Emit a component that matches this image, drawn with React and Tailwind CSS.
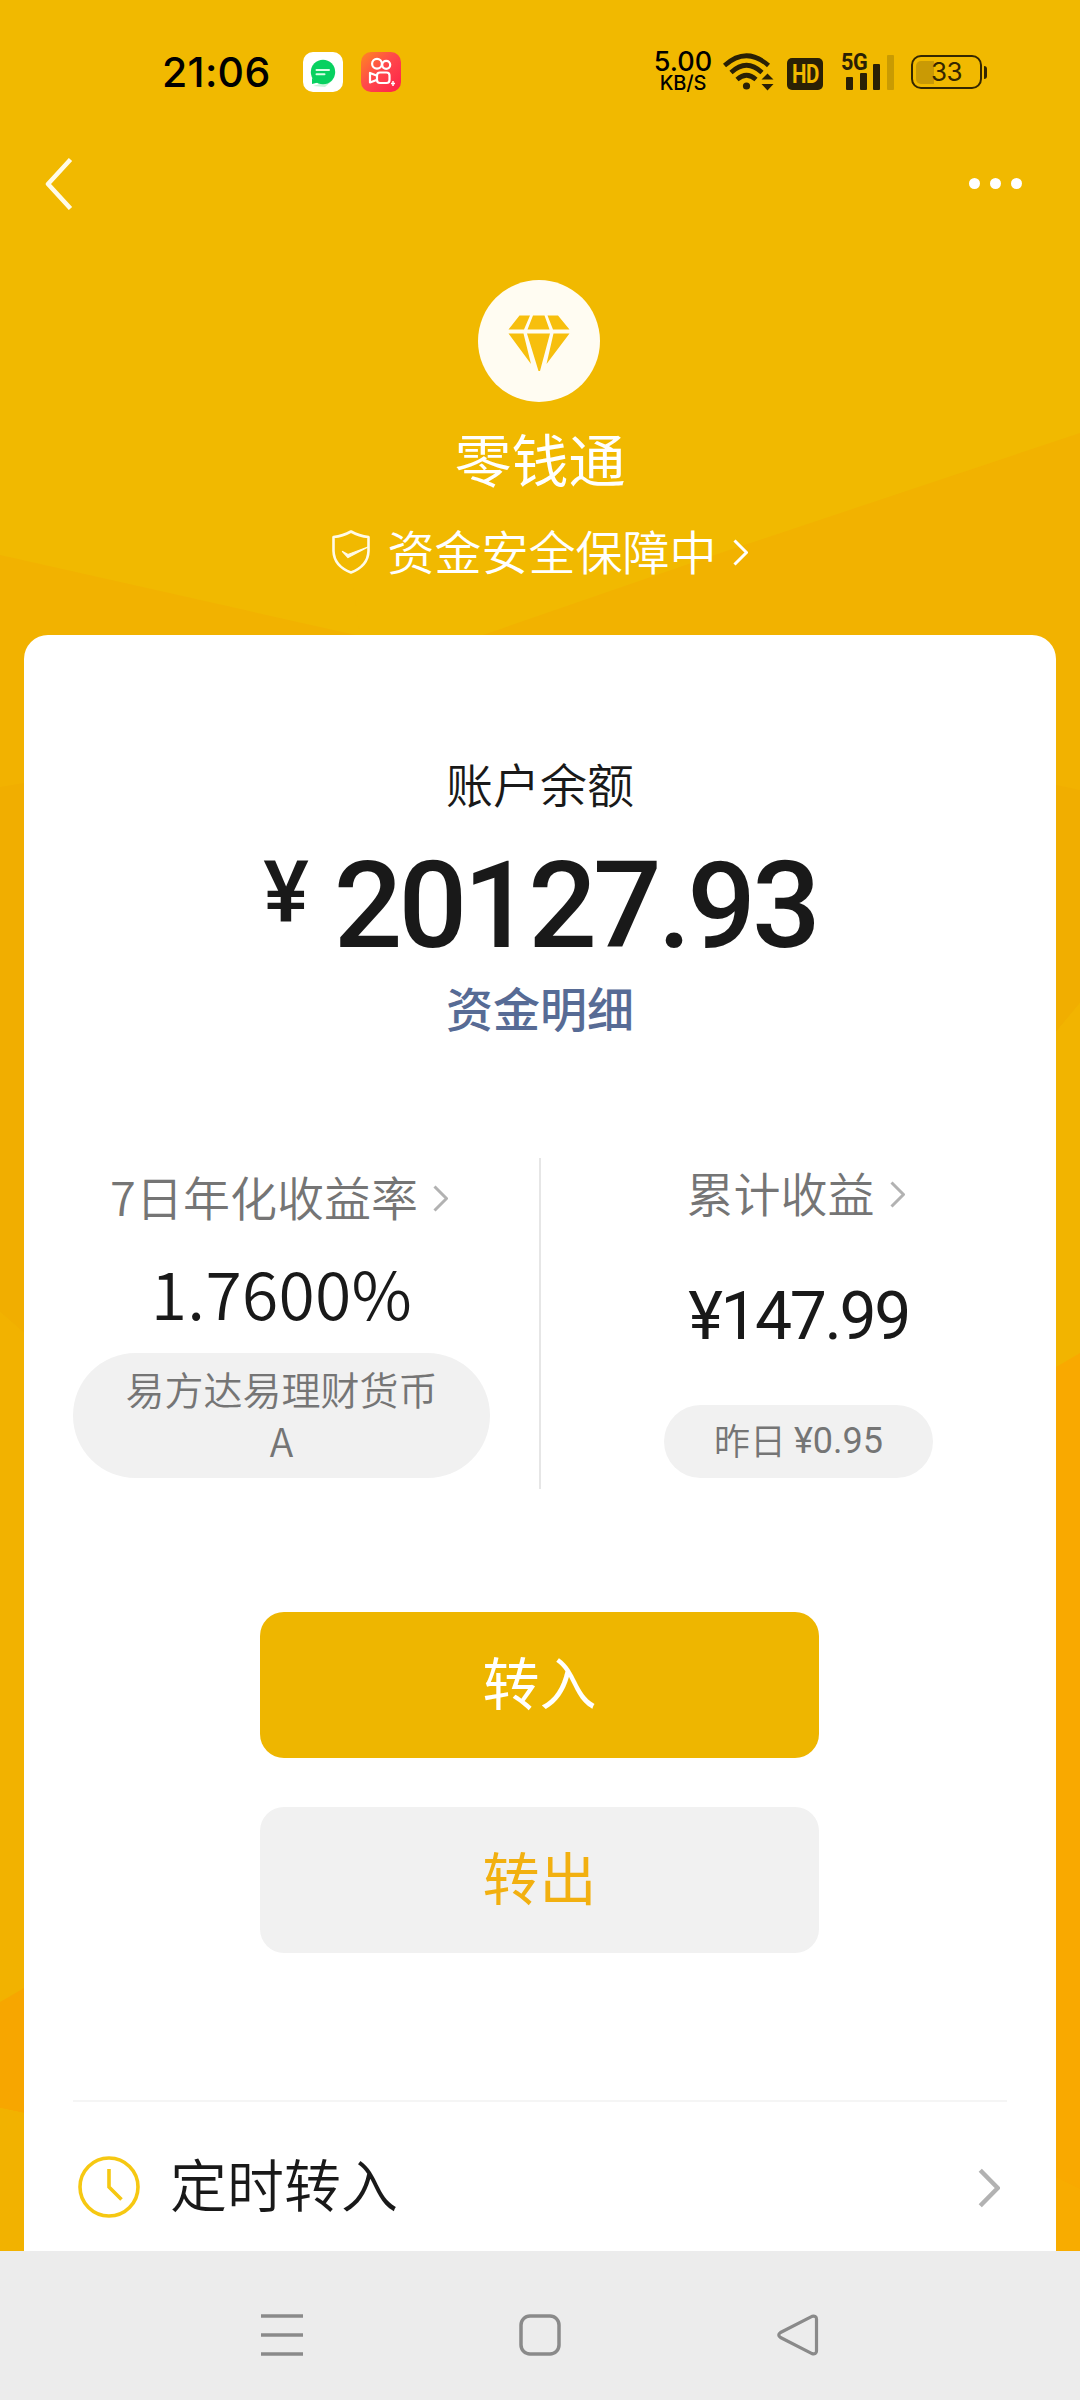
const cjk = 'font-["Noto_Sans_CJK_SC",sans-serif]'
const num = 'font-["Roboto","Noto_Sans_CJK_SC",sans-serif]'

function Backdrop() {
  return (
    <svg className="col-start-1 row-start-1 block" width="1080" height="2251" viewBox="0 0 1080 2251">
      <rect width="1080" height="2251" fill="#f1b900" />
      <path d="M0 555 360 636 490 630 1080 433V790H0Z" fill="#f2b200" />
      <path d="M350 560H700L480 636H360Z" fill="#f1b900" />
      <path d="M0 787 24 783 1056 785 1080 790V1003L1056 1032 24 1333 0 1312Z" fill="#f1ae00" />
      <path d="M0 1312 24 1333V1988L0 2002Z" fill="#f2b200" />
      <path d="M1056 1032 1080 1003V1353L1056 1367Z" fill="#f2b400" />
      <path d="M0 2002 24 1988V2113L0 2108Z" fill="#f7a600" />
      <path d="M0 2108 24 2113V2251H0Z" fill="#f2b200" />
      <path d="M1056 1367 1080 1353V2251H1056Z" fill="#f9a900" />
      <path d="M1056 2177 1080 2189V2251H1056Z" fill="#f8ac00" />
    </svg>
  )
}

function Chevron({ className, width = 15, height = 27, stroke = 3 }) {
  return (
    <svg className={className} width={width} height={height} fill="none" stroke="currentColor" strokeWidth={stroke} strokeLinejoin="round">
      <path d={`M${stroke / 2} ${stroke / 2} L${width - stroke / 2} ${height / 2} L${stroke / 2} ${height - stroke / 2}`} />
    </svg>
  )
}

function StatusBar() {
  return (
    <div className='flex h-36 items-center pl-[162px] pr-[93px] font-["Inter",sans-serif]'>
      <span className="w-[141px] text-[41px] font-medium leading-none tracking-[0.3px] text-black">21:06</span>
      <svg className="mr-[18px]" width="40" height="40" viewBox="0 0 40 40">
        <rect width="40" height="40" rx="10" fill="#fff" />
        <path d="M10 34 22 35 30 28Z" fill="#c9f5d9" />
        <path d="M9 26v6l6-1.500Z" fill="#07d160" />
        <circle cx="20" cy="20" r="12.200" fill="#07d160" />
        <path d="M13.500 18h12.500M13.500 22.200h8" stroke="#d9ffe6" strokeWidth="2" strokeLinecap="round" />
      </svg>
      <svg width="40" height="40" viewBox="0 0 40 40">
        <defs>
          <linearGradient id="ks" x1="0" y1="0" x2="1" y2="1">
            <stop offset="0" stopColor="#ff8a1f" />
            <stop offset=".45" stopColor="#ff4a4a" />
            <stop offset="1" stopColor="#ff1f4b" />
          </linearGradient>
        </defs>
        <rect width="40" height="40" rx="10" fill="url(#ks)" />
        <g fill="none" stroke="#fff" strokeWidth="2.200" strokeLinejoin="round">
          <circle cx="16" cy="11.800" r="4.900" />
          <circle cx="25.200" cy="12.800" r="4" />
          <rect x="16" y="20.500" width="12.500" height="10.500" rx="3" />
          <path d="M15.500 23.500 9 21v9.500l6.500-2.500" />
        </g>
        <path d="M32 29v5M30 31.500h4" stroke="#fff" strokeWidth="1.500" />
      </svg>
      <div className="ml-auto flex w-[62px] flex-col items-center font-medium text-black">
        <span className="text-[27px] leading-[21px]">5.00</span>
        <span className="mt-[1px] text-[20px] leading-[20px] tracking-[-0.2px]">KB/S</span>
      </div>
      <svg className="ml-[9px]" width="52" height="40" viewBox="0 0 52 40" fill="none" stroke="#2a2005" strokeWidth="4.600">
        <path d="M1.500 13.500Q23.500-6 45.500 13.500" />
        <path d="M8 20.500Q23.500 6 39 20.500" />
        <path d="M14 27.500Q23.500 19 33 27.500" />
        <circle cx="23.500" cy="34" r="3.600" fill="#2a2005" stroke="none" />
        <path d="M38.500 27.500 44.500 21.500 50.500 27.500ZM38.500 32 44.500 38.500 50.500 32Z" fill="#2a2005" stroke="none" />
      </svg>
      <div className='ml-[12px] mt-1 flex h-8 w-9 items-center justify-center rounded-[5px] bg-[#2a2005] font-["Roboto",sans-serif] text-[25px] font-bold leading-none tracking-[-0.5px] text-[#f2b900]'>
        <span className="scale-x-[0.82]">HD</span>
      </div>
      <div className="relative ml-[18px] h-9">
        <svg width="53" height="36" viewBox="0 0 53 36" fill="#2a2005">
          <rect x="5" y="23" width="7" height="13" rx="1" />
          <rect x="19" y="19" width="7" height="17" rx="1" />
          <rect x="32" y="10" width="7" height="26" rx="1" />
          <rect x="46" y="1" width="7" height="35" rx="1" fill="#c99b02" />
        </svg>
        <span className='absolute -top-[4px] left-0 origin-left scale-x-90 font-["Roboto",sans-serif] text-[24px] font-bold leading-[24px] tracking-[-0.5px] text-[#2a2005]'>5G</span>
      </div>
      <div className="ml-[17px] flex items-center">
        <div className="relative flex h-[34px] w-[71px] items-center justify-center rounded-[10px] border-[2.5px] border-[#352700]">
          <div className="absolute left-[3px] h-[23px] w-[18px] rounded-l-[5px] bg-[#c99a05]" />
          <span className='relative font-["Inter",sans-serif] text-[26px] leading-none tracking-[-0.5px] text-[#352700]'>33</span>
        </div>
        <div className="ml-[2px] h-[13px] w-[3px] rounded-r bg-[#352700]" />
      </div>
    </div>
  )
}

function Header() {
  return (
    <header className="flex flex-col items-center text-white">
      <div className="flex h-[79px] w-full items-center justify-between pl-[45px] pr-[58px]">
        <svg width="28" height="52" fill="none" stroke="#fffbe8" strokeWidth="4.500" strokeLinejoin="round">
          <path d="M25.500 1.500 3 26 25.500 50.500" />
        </svg>
        <div className="flex gap-[10px]">
          <i className="size-[11px] rounded-full bg-white" />
          <i className="size-[11px] rounded-full bg-white" />
          <i className="size-[11px] rounded-full bg-white" />
        </div>
      </div>
      <div className="mt-[57px] mr-[2px] flex size-[122px] items-center justify-center rounded-full bg-[#fffcf2] pt-[5px]">
        <svg width="62" height="57" viewBox="0 0 62 57" fill="#f7bf0d">
          <path d="M11.500.500H22L16 14.500H.500ZM25 .500H36.500L41.500 14.500H19.500ZM39.500.500H50L61.500 14.500H45ZM.500 18.500H15.500L23 49ZM19 18.500H42L32 56H30.500ZM45.500 18.500H61.500L38.500 49Z" />
        </svg>
      </div>
      <h1 className="mt-[17px] h-[76px] text-[57px] leading-[76px]">零钱通</h1>
      <div className="mt-[25px] mr-[1px] flex h-[60px] items-center">
        <svg className="mt-[3px]" width="38" height="44" viewBox="0 0 38 44" fill="none" stroke="#fffbe8" strokeWidth="2.600" strokeLinejoin="round">
          <path d="M19 1.500Q27 6 36.500 7V21Q36 36 19 42.500 2 36 1.500 21V7Q11 6 19 1.500Z" />
          <path d="M10.500 21.500 16 27.500 36 17 16 24.500Z" fill="#fffbe8" strokeWidth="1.300" />
        </svg>
        <span className="ml-[18px] text-[47px] font-[350] leading-[60px]">资金安全保障中</span>
        <Chevron className="ml-[16px] mt-[4px]" />
      </div>
    </header>
  )
}

function Stats() {
  return (
    <div className="mt-[122px] flex h-[331px] justify-between text-[#757575]">
      <div className="flex w-[417px] flex-col items-center pt-2">
        <div className="mr-[5px] flex h-[60px] items-center">
          <span className="text-[47px] font-[350] leading-[60px]">7日年化收益率</span>
          <Chevron className="ml-[15px] mt-1 text-[#b2b2b2]" />
        </div>
        <div className="mt-[25px] h-20 text-[66px] font-[350] leading-[80px] tracking-[0.3px] text-[#191919]">1.7600%</div>
        <div className="mt-[22px] h-[125px] w-full rounded-full bg-[#f1f1f1] px-[50px] pt-[9px] text-center text-[39px] font-[350] leading-[52px]">
          易方达易理财货币A
        </div>
      </div>
      <div className="w-[2px] bg-[#e6e6e6]" />
      <div className="flex w-[417px] flex-col items-center pt-[4px]">
        <div className="mr-[6px] flex h-[60px] items-center">
          <span className="text-[47px] font-[350] leading-[60px]">累计收益</span>
          <Chevron className="ml-[15px] mt-1 text-[#b2b2b2]" />
        </div>
        <div className={`${num} mt-[55px] h-20 text-[66px] leading-[80px] tracking-[-2.4px] text-[#191919]`}>¥147.99</div>
        <div className="mt-12 flex h-[73px] w-[269px] items-center justify-center gap-[8px] rounded-full bg-[#f1f1f1] text-[36px] leading-[73px]">
          <span className="pb-[4px] font-[350]">昨日</span>
          <span className={num}>¥0.95</span>
        </div>
      </div>
    </div>
  )
}

function Card() {
  return (
    <main className="mx-6 mt-[55px] h-[1616px] overflow-hidden rounded-t-3xl bg-white px-[49px] pt-[118px] text-center text-[#191919]">
      <div className="h-[60px] text-[47px] font-[350] leading-[60px]">账户余额</div>
      <div className={`${num} mt-[33px] flex h-[120px] justify-center font-medium`}>
        <span className="mr-[25px] text-[86px] leading-[94px]">¥</span>
        <span className="text-[121px] leading-[120px] tracking-[-4px]">20127.93</span>
      </div>
      <a className="mt-[11px] block h-[60px] text-[47px] font-medium leading-[60px] text-[#576b95]">资金明细</a>
      <div className="-mt-px">
        <Stats />
      </div>
      <div className="mt-[123px] ml-[187px] flex w-[559px] flex-col gap-[49px] text-[57px]">
        <button className="h-[146px] rounded-3xl bg-[#eeb600] pb-[8px] text-white">转入</button>
        <button className="h-[146px] rounded-3xl bg-[#f1f1f1] pb-[8px] text-[#f2b010]">转出</button>
      </div>
      <div className="mt-[147px] h-[2px] bg-[#f5f5f5]" />
      <div className="mt-[50px] flex h-[70px] items-center pl-[5px] pr-[7px]">
        <svg width="62" height="62" fill="none" stroke="#f6c812" strokeWidth="3.600">
          <circle cx="31" cy="31" r="29" />
          <path d="M31 13V31L43.500 43.500" />
        </svg>
        <span className="ml-[30px] pb-[10px] text-[57px] font-[350] leading-[70px]">定时转入</span>
        <Chevron className="ml-auto mt-[2px] text-[#b2b2b2]" width={22} height={40} stroke={4.5} />
      </div>
    </main>
  )
}

function NavKeys() {
  return (
    <nav className="flex h-[149px] items-center justify-center gap-[216px] bg-[#ececec] pt-[18px]">
      <svg width="42" height="42" fill="none" stroke="#8a8a8a" strokeWidth="3.500">
        <path d="M0 2H42M0 21H42M0 40H42" />
      </svg>
      <svg width="42" height="42" fill="none" stroke="#8a8a8a" strokeWidth="3.500">
        <rect x="2" y="2" width="38" height="38" rx="9" />
      </svg>
      <svg width="42" height="42" fill="none" stroke="#8a8a8a" strokeWidth="3.200" strokeLinejoin="round">
        <path d="M3.500 18.500 35 2.300Q39.500 1.500 39.500 5V37Q39.500 40.500 35 39.700L3.500 23.500Q0 21 3.500 18.500Z" />
      </svg>
    </nav>
  )
}

export default function App() {
  return (
    <div className={`${cjk} w-[1080px] overflow-hidden`}>
      <div className="grid h-[2251px] grid-cols-[1080px]">
        <Backdrop />
        <div className="z-10 col-start-1 row-start-1">
          <StatusBar />
          <Header />
          <Card />
        </div>
      </div>
      <NavKeys />
    </div>
  )
}
